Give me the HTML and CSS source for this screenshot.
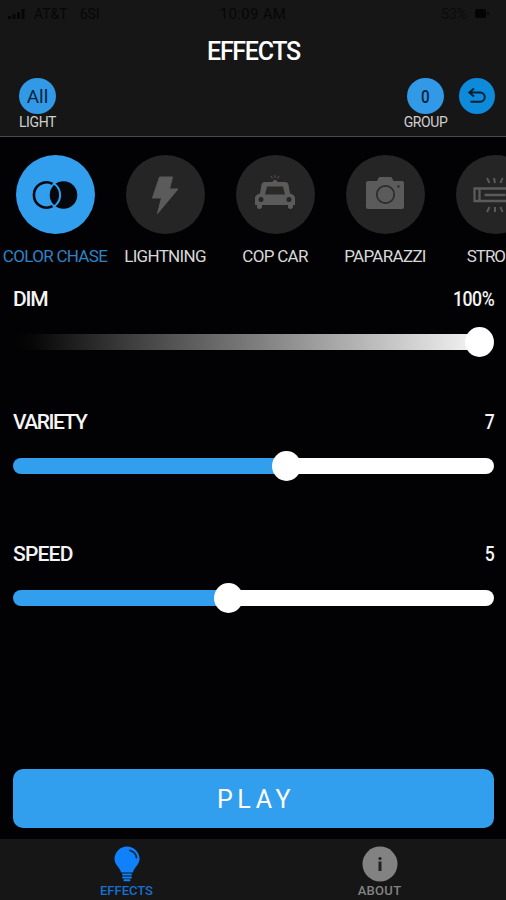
FILE: index.html
```html
<!DOCTYPE html>
<html lang="en">
<head>
  <meta charset="UTF-8">
  <meta name="viewport" content="width=device-width, initial-scale=1.0">
  <title>Effects</title>
  <link rel="stylesheet" href="styles.css">
</head>
<body>
  <div class="app">
    <header class="header">
      <div class="status-bar">
        <div class="status-left">
          <svg width="17" height="12" viewBox="0 0 17 12"><path d="M0 8h3v3H0zM4.500 6h3v5h-3zM9 4h3v7H9zM13.500 1h3v10h-3z" fill="#060607"/></svg>
          <span class="carrier">AT&amp;T</span>
          <span>6SI</span>
        </div>
        <span class="clock">10:09 AM</span>
        <div class="status-right">
          <span>53%</span>
          <svg width="16" height="12" viewBox="0 0 16 12"><rect x="1" y="1" width="11" height="9" rx="2" fill="#040405"/><rect x="13" y="4" width="2" height="3" fill="#0b0b0c"/></svg>
        </div>
      </div>
      <h1 class="title">EFFECTS</h1>
      <div class="targets">
        <div class="target light">
          <div class="round">All</div>
          <span class="target-name">LIGHT</span>
        </div>
        <div class="target group">
          <div class="round"><span class="count">0</span></div>
          <span class="target-name">GROUP</span>
        </div>
        <div class="round undo">
          <svg width="20" height="18" viewBox="0 0 20 18" fill="none" stroke="#06202f" stroke-width="1.900"><path d="M7 1.500 2.300 5.500l4.700 4M2.500 5.500h10.700a4.600 4.600 0 0 1 0 9.200H3.500"/></svg>
        </div>
      </div>
    </header>

    <div class="effects">
      <div class="effect selected">
        <div class="effect-icon">
          <svg width="46" height="30" viewBox="0 0 46 30">
            <circle cx="31.500" cy="15" r="13.800" fill="#04080d"/>
            <circle cx="14.500" cy="15" r="13.600" fill="none" stroke="#319eee" stroke-width="2"/>
            <path d="M20.500 3.900A12.600 12.600 0 1 0 20.500 26.100" fill="none" stroke="#04080d" stroke-width="2.600"/>
            <path d="M21.300 5.500A13.800 13.800 0 0 0 21.300 24.500" fill="none" stroke="#319eee" stroke-width="1.200" transform="translate(-1.500 0)"/>
          </svg>
        </div>
        <span class="effect-name">COLOR CHASE</span>
      </div>
      <div class="effect">
        <div class="effect-icon">
          <svg width="28" height="40" viewBox="0 0 28 40"><path d="M8.500 2H21.500L18.500 14H27L6.500 38.500 10.500 23H1.500z" fill="#5b5b5b" stroke="#5b5b5b" stroke-linejoin="round"/></svg>
        </div>
        <span class="effect-name">LIGHTNING</span>
      </div>
      <div class="effect">
        <div class="effect-icon car">
          <svg width="42" height="36" viewBox="0 0 42 36">
            <path d="M10.500 7H31.500q2.500 0 2.900 2.500l1.600 9q5 1.500 5 4.500v7h-2v2.500q-2.800 3-5 0V30H8v2.500q-2.800 3-5 0V30H1v-7q0-3 5-4.500l1.600-9Q8 7 10.500 7zM18 7.200q3-5 6 0z" fill="#5b5b5b"/>
            <path d="M13 11.500h16l2 8h-20z" fill="#2a2927"/>
            <circle cx="7" cy="24.500" r="2.500" fill="#262626"/><circle cx="35" cy="24.500" r="2.500" fill="#262626"/>
            <path d="M21 0v3M17 1l1.500 2.500M25 1l-1.500 2.500" stroke="#4b4b4b" stroke-width="1.200"/>
          </svg>
        </div>
        <span class="effect-name">COP CAR</span>
      </div>
      <div class="effect">
        <div class="effect-icon camera">
          <svg width="40" height="34" viewBox="0 0 40 34">
            <path d="M3 5h9l1-2q.6-2 2-2h10.500q1.500 0 2 2l1 2H37q2 0 2 2v24q0 2-2 2H3q-2 0-2-2V7q0-2 2-2z" fill="#5b5b5b"/>
            <circle cx="20.500" cy="18.500" r="8.700" fill="none" stroke="#2b2b2b" stroke-width="1.700"/>
            <circle cx="33.500" cy="10.500" r="1.200" fill="#2b2b2b"/>
          </svg>
        </div>
        <span class="effect-name">PAPARAZZI</span>
      </div>
      <div class="effect">
        <div class="effect-icon">
          <svg width="44" height="38" viewBox="0 0 44 38" fill="none" stroke="#5b5b5b" stroke-width="2">
            <path d="M1.500 12.500h41v12.500h-41zM6.500 12.500v12.500M11.500 19h21M37.500 12.500v12.500" stroke-width="2.300"/>
            <path d="M14 2l2.500 5M21 2l1 5M29.500 2l-2 5M16.500 31l-2.500 5M22 31v5M27.500 31l2 5"/>
          </svg>
        </div>
        <span class="effect-name strobe-name">STROBE</span>
      </div>
    </div>

    <div class="controls">
      <div class="control">
        <div class="control-head"><span class="dim-name">DIM</span><span class="number">100%</span></div>
        <div class="slider dim"><div class="fill" style="width: 454px"></div><div class="thumb"></div></div>
      </div>
      <div class="control">
        <div class="control-head"><span class="variety-name">VARIETY</span><span class="number">7</span></div>
        <div class="slider"><div class="fill" style="width: 261px"></div><div class="thumb"></div></div>
      </div>
      <div class="control">
        <div class="control-head"><span>SPEED</span><span class="number">5</span></div>
        <div class="slider"><div class="fill" style="width: 203px"></div><div class="thumb"></div></div>
      </div>
    </div>

    <button class="play">PLAY</button>

    <nav class="tabs">
      <div class="tab active">
        <svg width="28" height="36" viewBox="0 0 28 36">
          <path d="M14 .5a12.500 12.500 0 0 1 12.500 12.500c0 6-5.500 8-6.500 13.500H8C7 21 1.500 19 1.500 13A12.500 12.500 0 0 1 14 .5z" fill="#0f82fb"/>
          <path d="M10 28.500h8M10 31.500h8M11.500 34.300h5" stroke="#0f82fb" stroke-width="2" stroke-linecap="round"/>
          <path d="M17 4.500q5.500 1.500 6.500 7" fill="none" stroke="#102542" stroke-width="1.800" stroke-linecap="round"/>
        </svg>
        <span>EFFECTS</span>
      </div>
      <div class="tab">
        <svg width="36" height="36" viewBox="0 0 36 36">
          <circle cx="18" cy="18" r="17.500" fill="#828282"/>
          <path d="M16.500 15.500h3v9.500h-3z" fill="#202020"/><circle cx="18" cy="12.500" r="1.600" fill="#202020"/>
        </svg>
        <span class="about-name">ABOUT</span>
      </div>
    </nav>
  </div>
</body>
</html>
```
FILE: styles.css
```css
* {
  box-sizing: border-box;
}
body {
  margin: 0;
  background: #020204;
  color: #f4f4f4;
  font-family: Roboto, "Liberation Sans", sans-serif;
}
svg {
  display: block;
  flex-shrink: 0;
}
.app {
  width: 506px;
  height: 900px;
  display: flex;
  flex-direction: column;
  overflow: hidden;
}
.header {
  height: 137px;
  background: #161617;
  border-bottom: 1px solid #4a4a4b;
  flex-shrink: 0;
}
.status-bar {
  height: 27px;
  padding: 0 16px 0 8px;
  display: grid;
  grid-template-columns: 1fr auto 1fr;
  align-items: center;
  font-size: 14px;
  color: #070708;
}
.status-left, .status-right {
  display: flex;
  align-items: center;
  gap: 9px;
}
.carrier {
  margin-right: 3px;
}
.status-right {
  justify-content: flex-end;
  gap: 7px;
  color: #0c0c0d;
}
.clock {
  font-size: 15px;
  letter-spacing: 0.3px;
  padding-left: 8px;
}
.title {
  margin: 0;
  height: 48px;
  line-height: 49px;
  text-align: center;
  font-size: 25px;
  font-weight: 500;
  letter-spacing: -1.3px;
  padding-left: 1px;
  color: #fff;
}
.targets {
  display: flex;
  align-items: flex-start;
  padding: 3px 11px 0 16px;
}
.target {
  display: flex;
  flex-direction: column;
  align-items: center;
  width: 43px;
}
.group {
  margin-left: auto;
  margin-right: 12px;
}
.round {
  width: 37px;
  height: 36px;
  border-radius: 50%;
  background: #3299e6;
  color: #08243a;
  display: flex;
  align-items: center;
  justify-content: center;
  font-size: 19px;
}
.count {
  transform: scaleX(0.8);
  font-weight: 500;
}
.undo {
  width: 36px;
  background: #0e8ada;
}
.target-name {
  font-size: 14px;
  line-height: 17px;
  letter-spacing: -0.4px;
  color: #cfcfcf;
}
.effects {
  display: flex;
  margin-top: 18px;
  height: 126px;
  flex-shrink: 0;
}
.effect {
  width: 110px;
  flex-shrink: 0;
  display: flex;
  flex-direction: column;
  align-items: center;
}
.effect-icon {
  width: 79px;
  height: 79px;
  border-radius: 50%;
  background: #252526;
  display: flex;
  align-items: center;
  justify-content: center;
}
.car {
  padding-bottom: 4px;
}
.camera {
  padding-bottom: 3px;
}
.effect-name {
  margin-top: 12px;
  font-size: 17px;
  line-height: 20px;
  letter-spacing: -0.7px;
  white-space: nowrap;
  color: #d8d8d8;
}
.strobe-name {
  letter-spacing: -1px;
}
.selected .effect-icon {
  background: #319eee;
}
.selected .effect-name {
  color: #2f83c5;
}
.controls {
  padding: 0 12px 0 13px;
  height: 488px;
}
.control {
  height: 123px;
  padding-top: 6px;
}
.control + .control {
  height: 132px;
}
.control-head {
  display: flex;
  justify-content: space-between;
  font-size: 21px;
  line-height: 24px;
  font-weight: 500;
  letter-spacing: -0.8px;
}
.dim-name {
  letter-spacing: -1.2px;
}
.variety-name {
  letter-spacing: -1.5px;
}
.number {
  letter-spacing: -0.5px;
  transform: scaleX(0.84);
  transform-origin: right;
}
.slider {
  margin-top: 16px;
  height: 30px;
  display: flex;
  align-items: center;
}
.control + .control .slider {
  margin-top: 17px;
}
.slider::after {
  content: "";
  flex: 1;
  height: 16px;
  border-radius: 0 8px 8px 0;
  margin-left: -4px;
  background: #fff;
}
.dim::after {
  display: none;
}
.fill {
  height: 16px;
  margin-right: -2px;
  border-radius: 8px 0 0 8px;
  background: #319eee;
}
.dim .fill {
  background: linear-gradient(to right, #020204, #060607 4%, #3c3c3c 25%, #7a7a7a 52%, #eee);
}
.thumb {
  width: 29px;
  height: 30px;
  border-radius: 50%;
  background: #fff;
  flex-shrink: 0;
}
.play {
  margin: 0 12px 0 13px;
  height: 59px;
  flex-shrink: 0;
  border: none;
  border-radius: 10px;
  background: #319eee;
  color: #fff;
  font-family: inherit;
  font-size: 25px;
  letter-spacing: 4.6px;
  padding: 2px 0 0 5px;
}
.tabs {
  margin-top: 11px;
  height: 61px;
  flex-shrink: 0;
  display: flex;
  background: #161617;
}
.tab {
  flex: 1;
  padding-top: 7px;
  display: flex;
  flex-direction: column;
  align-items: center;
  font-size: 13px;
  font-weight: 500;
  line-height: 15px;
  color: #828282;
}
.tab span {
  margin-top: 1px;
}
.about-name {
  letter-spacing: 0.3px;
}
.active {
  color: #176fd0;
}
```
